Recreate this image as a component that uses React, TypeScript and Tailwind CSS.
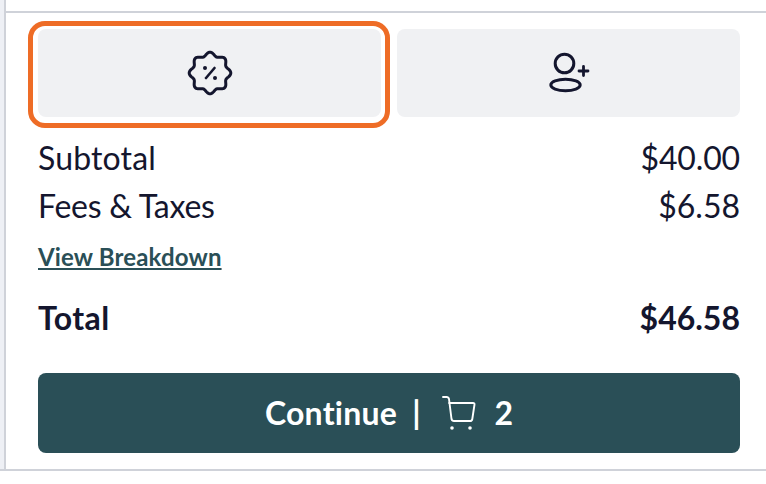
const badgePath = Array.from({ length: 145 }, (_, i) => {
  const a = (i / 144) * Math.PI * 2
  const r = 19 + 1.8 * Math.cos(8 * a)
  return `${i === 0 ? "M" : "L"}${(24 + r * Math.sin(a)).toFixed(2)} ${(24 - r * Math.cos(a)).toFixed(2)}`
}).join(" ")

function BadgeIcon() {
  return (
    <svg width="48" height="48" viewBox="0 0 48 48" fill="none" stroke="#14162e" strokeWidth="3" strokeLinecap="round" strokeLinejoin="round">
      <path d={badgePath + " Z"} />
      <path d="M20 29 L28.5 19" strokeWidth="2.6" />
      <circle cx="19" cy="19" r="2" fill="#14162e" stroke="none" />
      <circle cx="29" cy="29" r="2" fill="#14162e" stroke="none" />
    </svg>
  )
}

function UserPlusIcon() {
  return (
    <svg width="48" height="48" viewBox="0 0 48 48" fill="none" stroke="#14162e" strokeWidth="3" strokeLinecap="round">
      <circle cx="19.5" cy="14.5" r="9.3" />
      <ellipse cx="20.5" cy="36" rx="14.7" ry="5.7" />
      <path d="M38.5 17.5 V26.5 M34 22 H43" strokeWidth="2.8" />
    </svg>
  )
}

function CartIcon() {
  return (
    <svg width="34" height="36" viewBox="0 0 34 36" fill="none" stroke="#ffffff" strokeWidth="1.9" strokeLinecap="round" strokeLinejoin="round">
      <path d="M1 2 H4.5 Q6.5 2 7 4 L9.5 24 Q10 26 12 26 H28 Q30 26 30.3 24 L32.5 9.5 Q32.7 8 31 8 H7" />
      <circle cx="10" cy="33" r="1.8" fill="#ffffff" stroke="none" />
      <circle cx="28" cy="33" r="1.8" fill="#ffffff" stroke="none" />
    </svg>
  )
}

export default function App() {
  return (
    <div className="w-[766px] h-[484px] bg-white font-['Lato',sans-serif] text-[#14162e] overflow-hidden">
      <div className="h-[471px] flex border-b-2 border-[#cfd2d9]">
        <div className="w-[6px] bg-[#eef0f5] border-r-2 border-[#cfd2d9]" />
        <div className="flex-1 pt-[11px]">
          <div className="border-t-2 border-[#cfd2d9] pl-[32px] pr-[26px] pt-[16px]">
            <div className="flex gap-4 h-[88px]">
              <div className="relative flex-1">
                <button className="w-full h-full flex items-center justify-center bg-[#f0f1f3] rounded-[8px]">
                  <BadgeIcon />
                </button>
                <div className="absolute -left-[10px] -right-[8.5px] -top-[8px] -bottom-[11px] border-[5px] border-[#ee6c26] rounded-[17px]" />
              </div>
              <button className="flex-1 flex items-center justify-center bg-[#f0f1f3] rounded-[8px]">
                <UserPlusIcon />
              </button>
            </div>
            <div className="mt-[17px] flex justify-between text-[32px] leading-[48px]">
              <span className="tracking-[0.15px]">Subtotal</span>
              <span className="tracking-[-0.15px]">$40.00</span>
            </div>
            <div className="flex justify-between text-[32px] leading-[48px]">
              <span className="tracking-[-0.25px]">Fees &amp; Taxes</span>
              <span>$6.58</span>
            </div>
            <div className="mt-[8px] h-[38px] leading-[38px]">
              <a className="text-[24px] font-bold tracking-[0.15px] text-[#2a4f57] underline">View Breakdown</a>
            </div>
            <div className="mt-[18px] flex justify-between text-[32px] leading-[48px] font-bold">
              <span className="tracking-[0.4px]">Total</span>
              <span>$46.58</span>
            </div>
            <button className="mt-[31px] w-full h-[80px] flex items-center justify-center rounded-[8px] bg-[#2a4f57] text-white text-[32px] font-bold">
              <span className="tracking-[0.25px]">Continue</span>
              <span className="ml-[15px]">|</span>
              <span className="ml-[21px] flex"><CartIcon /></span>
              <span className="ml-[19px]">2</span>
            </button>
          </div>
        </div>
      </div>
    </div>
  )
}
